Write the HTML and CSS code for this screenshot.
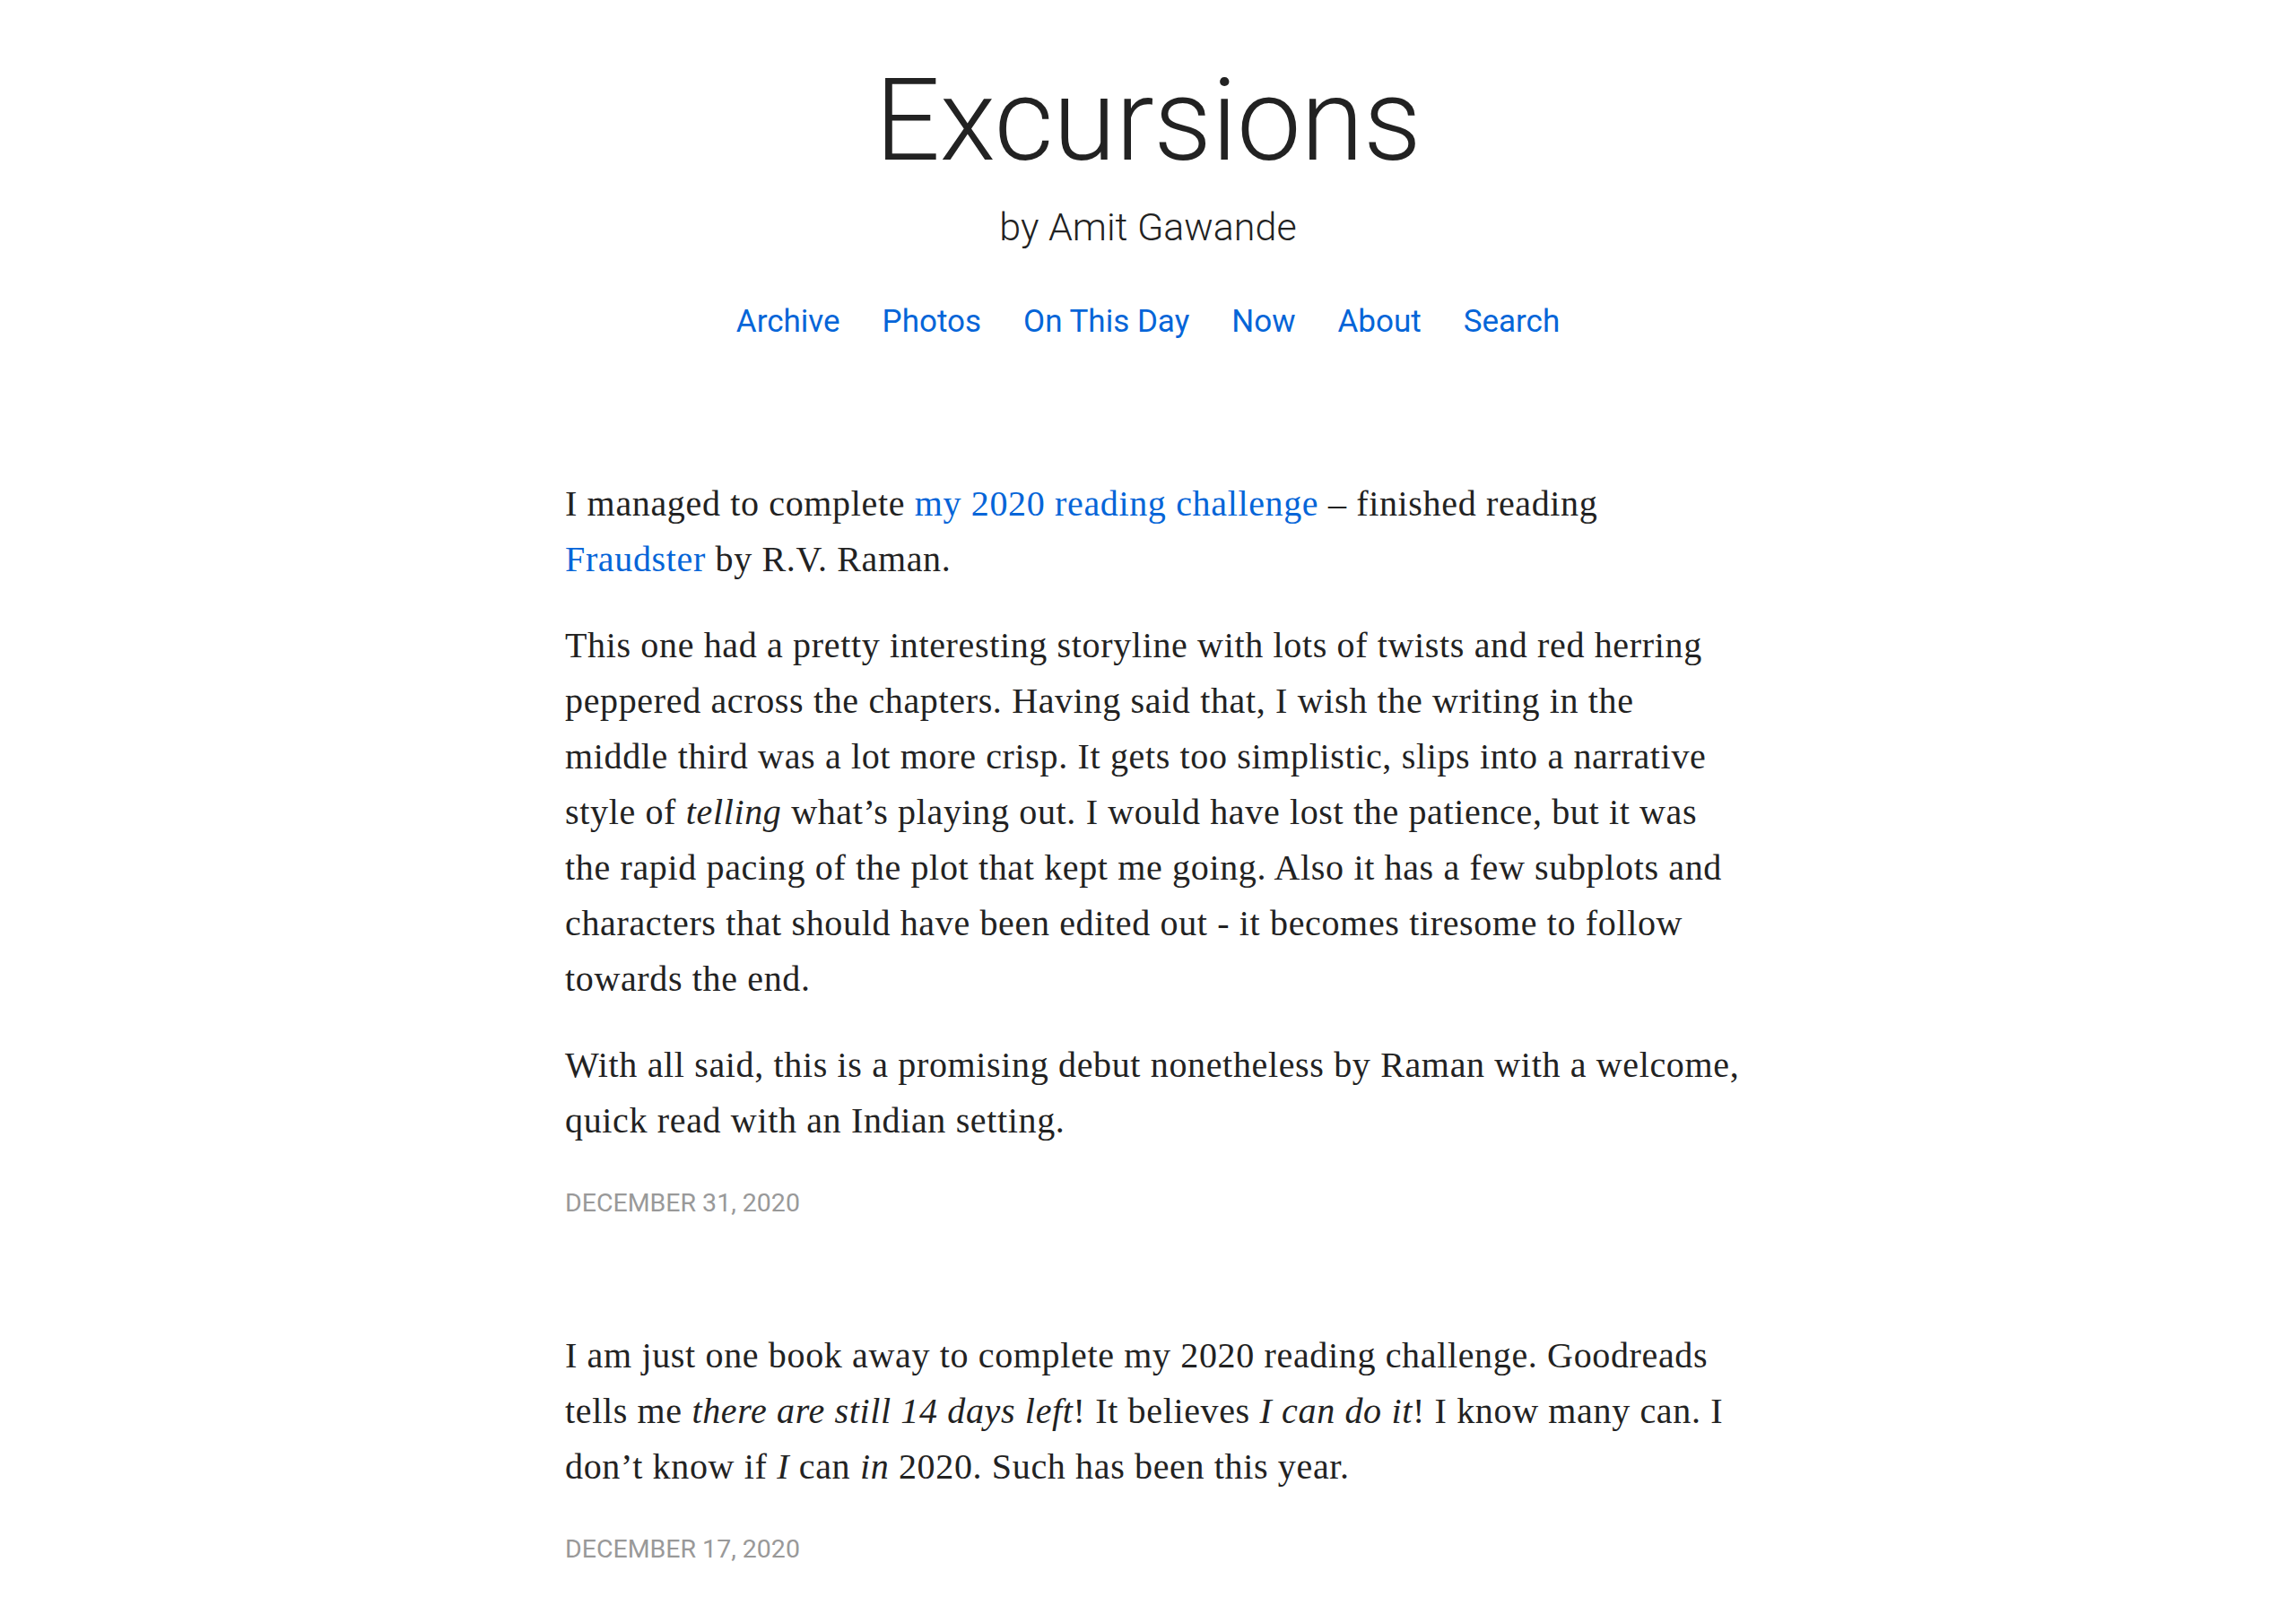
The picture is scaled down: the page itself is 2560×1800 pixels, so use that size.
FILE: index.html
```html
<!DOCTYPE html>
<html lang="en">
<head>
<meta charset="utf-8">
<title>Excursions</title>
<link rel="stylesheet" href="styles.css">
</head>
<body>
<header class="site-header">
  <h1 class="site-title">Excursions</h1>
  <p class="site-byline">by Amit Gawande</p>
  <nav class="site-nav">
    <a href="#">Archive</a>
    <a href="#">Photos</a>
    <a href="#">On This Day</a>
    <a href="#">Now</a>
    <a href="#">About</a>
    <a href="#">Search</a>
  </nav>
</header>

<main class="posts">
  <article class="post">
    <div class="post-body">
      <p>I managed to complete <a href="#">my 2020 reading challenge</a> – finished reading <a href="#">Fraudster</a> by R.V. Raman.</p>
      <p>This one had a pretty interesting storyline with lots of twists and red herring peppered across the chapters. Having said that, I wish the writing in the middle third was a lot more crisp. It gets too simplistic, slips into a narrative style of <em>telling</em> what’s playing out. I would have lost the patience, but it was the rapid pacing of the plot that kept me going. Also it has a few subplots and characters that should have been edited out - it becomes tiresome to follow towards the end.</p>
      <p>With all said, this is a promising debut nonetheless by Raman with a welcome, quick read with an Indian setting.</p>
    </div>
    <a class="post-date" href="#">December 31, 2020</a>
  </article>

  <article class="post">
    <div class="post-body">
      <p>I am just one book away to complete my 2020 reading challenge. Goodreads tells me <em>there are still 14 days left</em>! It believes <em>I can do it</em>! I know many can. I don’t know if <em>I</em> can <em>in</em> 2020. Such has been this year.</p>
    </div>
    <a class="post-date" href="#">December 17, 2020</a>
  </article>
</main>
</body>
</html>
```

FILE: styles.css
```css
html, body {
  margin: 0;
  padding: 0;
  background: #ffffff;
}

body {
  font-family: "Liberation Serif", "Times New Roman", serif;
  color: #222222;
}

a {
  color: #0565d8;
  text-decoration: none;
}

/* Masthead */
.site-header {
  display: flex;
  flex-direction: column;
  align-items: center;
  padding-top: 70px;
  font-family: Roboto, "Liberation Sans", sans-serif;
}

.site-title {
  margin: 0;
  font-size: 128px;
  font-weight: 300;
  line-height: 1;
  color: #222222;
  letter-spacing: -0.5px;
}

.site-byline {
  margin: 34px 0 0;
  font-size: 43px;
  font-weight: 300;
  line-height: 1;
  color: #222222;
}

.site-nav {
  display: flex;
  gap: 47px;
  margin-top: 66px;
  font-size: 35px;
  font-weight: 400;
  line-height: 1;
}

/* Post list */
.posts {
  width: 1312px;
  margin: 155px 0 0 630px;
  display: flex;
  flex-direction: column;
  gap: 118px;
}

.post {
  display: flex;
  flex-direction: column;
}

.post-body p {
  margin: 0 0 34px;
  font-size: 40px;
  line-height: 62px;
  letter-spacing: 0.65px;
}

.post-body p:last-child {
  margin-bottom: 40px;
}

.post-body em {
  font-style: italic;
}

.post-date {
  align-self: flex-start;
  font-family: Roboto, "Liberation Sans", sans-serif;
  font-size: 28.5px;
  line-height: 42px;
  text-transform: uppercase;
  color: #999999;
}
```
